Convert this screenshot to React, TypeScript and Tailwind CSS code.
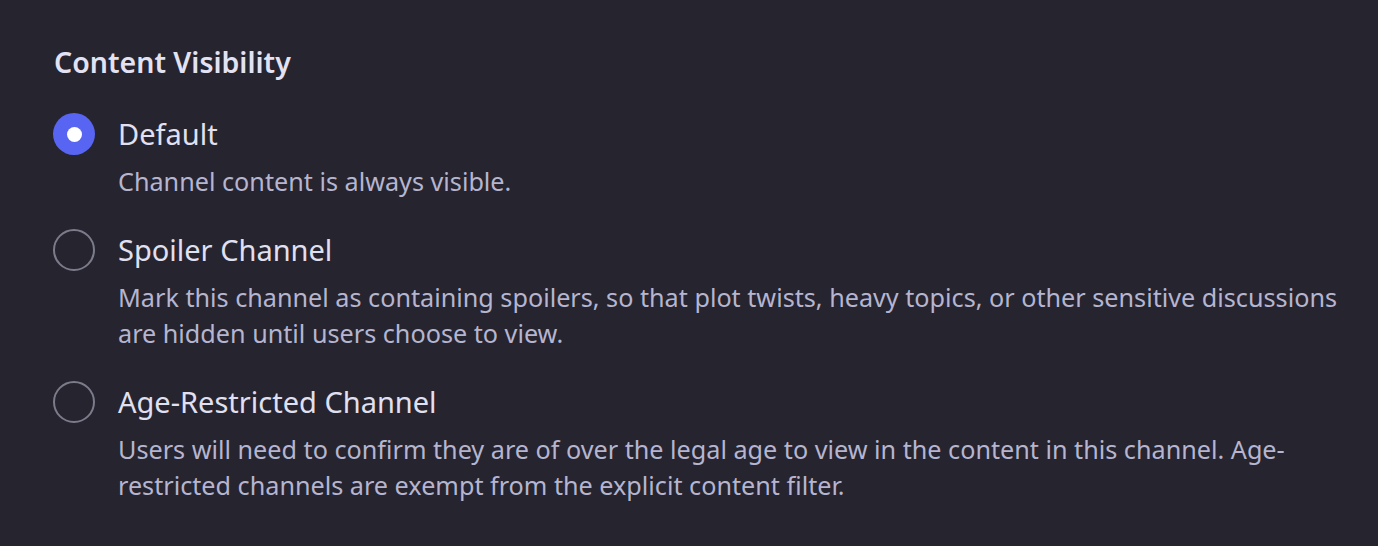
import React from "react";

type Opt = { label: string; desc: string; selected?: boolean };

const options: Opt[] = [
  { label: "Default", desc: "Channel content is always visible.", selected: true },
  {
    label: "Spoiler Channel",
    desc: "Mark this channel as containing spoilers, so that plot twists, heavy topics, or other sensitive discussions are hidden until users choose to view.",
  },
  {
    label: "Age-Restricted Channel",
    desc: "Users will need to confirm they are of over the legal age to view in the content in this channel. Age-restricted channels are exempt from the explicit content filter.",
  },
];

function Radio({ selected }: { selected?: boolean }) {
  if (selected) {
    return (
      <div className="w-[42px] h-[42px] rounded-full bg-[#5865f2] flex items-center justify-center">
        <div className="w-[15px] h-[15px] rounded-full bg-white" />
      </div>
    );
  }
  return <div className="w-[42px] h-[42px] rounded-full border-2 border-[#7c7b89]" />;
}

export default function App() {
  return (
    <div
      className="w-[1378px] h-[546px] bg-[#25242f] pt-[44px] pl-[53px] pr-[30px]"
      style={{ fontFamily: '"Noto Sans", "Open Sans", sans-serif' }}
    >
      <h2 className="text-[28.5px] leading-[36px] font-semibold text-[#e3e2f3] pl-[1px]">
        Content Visibility
      </h2>
      <div className="mt-[36px] flex flex-col gap-[33px]">
        {options.map((o) => (
          <div key={o.label} className="grid grid-cols-[42px_1fr] gap-x-[23px]">
            <div className="h-[36px] flex items-center">
              <Radio selected={o.selected} />
            </div>
            <div className="text-[29px] leading-[36px] font-normal text-[#e1e0f1]">{o.label}</div>
            <div />
            <div className="mt-[11px] text-[25.2px] leading-[36px] text-[#b6b5cf]">{o.desc}</div>
          </div>
        ))}
      </div>
    </div>
  );
}
